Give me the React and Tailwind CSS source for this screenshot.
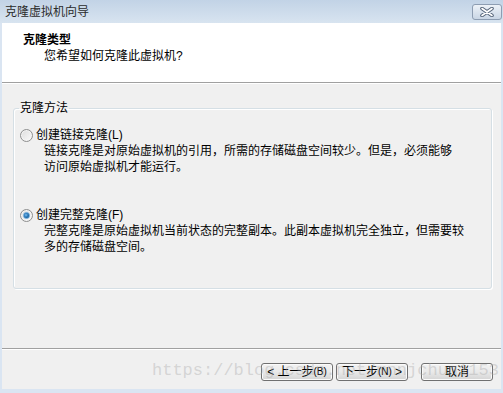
function Radio({ checked }) {
  return (
    <span className="relative flex h-[13px] w-[13px] shrink-0 items-center justify-center rounded-full border border-[#8e8f8f] bg-linear-to-br from-[#dcdcdc] to-[#fbfbfb] shadow-[inset_0_0_0_1px_#f4f4f4]">
      {checked && (
        <span className="h-[7px] w-[7px] rounded-full border border-[#5f9fd4] bg-[radial-gradient(circle_at_40%_40%,#7fc0f0_0%,#2a78b8_45%,#14507f_100%)]" />
      )}
    </span>
  )
}

function Btn({ children }) {
  return (
    <button className="flex h-[18px] w-[72px] items-center justify-center rounded-[3px] border border-[#707070] bg-linear-to-b from-[#f3f3f3] via-[#e9e9e9] to-[#d4d4d4] text-[12px] leading-none text-black shadow-[inset_0_0_0_1px_#fbfbfb]">
      {children}
    </button>
  )
}

export default function App() {
  return (
    <div className="relative flex h-[393px] w-[503px] flex-col overflow-hidden bg-[#dae5f2] font-['Liberation_Sans','Noto_Sans_CJK_SC',sans-serif] text-[12px] leading-[16px] text-black">
      {/* title bar */}
      <div className="flex h-[23px] items-center justify-between bg-linear-to-b from-[#c2d3e6] to-[#d8e4f0] pl-[5px] pr-[1px]">
        <span className="text-[12px] text-[#2b2b2b]">克隆虚拟机向导</span>
        <div className="flex h-[16px] w-[30px] items-center justify-center rounded-[3px] border border-[#8d9db2] bg-linear-to-b from-[#edf2f8] to-[#c9d6e5]">
          <svg width="16" height="10" viewBox="0 0 16 10">
            <path d="M3 1.5 L13 8.5 M13 1.5 L3 8.5" stroke="#56657a" strokeWidth="3.6" strokeLinecap="round" />
            <path d="M3 1.5 L13 8.5 M13 1.5 L3 8.5" stroke="#ffffff" strokeWidth="1.6" strokeLinecap="round" />
          </svg>
        </div>
      </div>

      <div className="mx-[2px] mb-[4px] flex flex-1 flex-col bg-[#f0f0f0]">
        {/* header */}
        <div className="h-[59px] bg-white pl-[21px] pt-[9px]">
          <div className="font-bold">克隆类型</div>
          <div className="ml-[21px]">您希望如何克隆此虚拟机?</div>
        </div>
        <div className="h-px bg-[#a0a0a0]" />
        <div className="h-px bg-white" />

        {/* body */}
        <div className="flex-1 pt-[16px]">
          <fieldset className="ml-[11px] mr-[9px] h-[189px] rounded-[3px] border border-[#d5dfe5] pl-[6px] pt-[11px] shadow-[1px_1px_0_#ffffff,inset_1px_1px_0_#ffffff]">
            <legend className="-ml-px px-[1px]">克隆方法</legend>
            <div className="flex h-[16px] items-center gap-[3px]">
              <Radio />
              <span>创建链接克隆(L)</span>
            </div>
            <div className="pl-[24px]">
              链接克隆是对原始虚拟机的引用，所需的存储磁盘空间较少。但是，必须能够
              <br />
              访问原始虚拟机才能运行。
            </div>

            <div className="mt-[32px] flex h-[16px] items-center gap-[3px]">
              <Radio checked />
              <span>创建完整克隆(F)</span>
            </div>
            <div className="pl-[24px]">
              完整克隆是原始虚拟机当前状态的完整副本。此副本虚拟机完全独立，但需要较
              <br />
              多的存储磁盘空间。
            </div>
          </fieldset>
        </div>

        <div className="h-px bg-[#a0a0a0]" />
        <div className="h-px bg-white" />

        {/* footer */}
        <div className="flex h-[39px] items-start justify-end pr-[8px] pt-[13px]">
          <Btn>
            &lt; 上一步<span className="text-[10px]">(B)</span>
          </Btn>
          <div className="ml-[3px]">
            <Btn>
              下一步<span className="text-[10px]">(N)</span>&nbsp;&gt;
            </Btn>
          </div>
          <div className="ml-[13px]">
            <Btn>取消</Btn>
          </div>
        </div>
      </div>

      {/* watermark */}
      <div className="pointer-events-none absolute left-[152px] top-[361px] whitespace-nowrap font-['Liberation_Mono',monospace] text-[17px] leading-[20px] text-[#a8a8a8]/40">
        https://blog.csdn.net/mnnjchun1153
      </div>
    </div>
  )
}
